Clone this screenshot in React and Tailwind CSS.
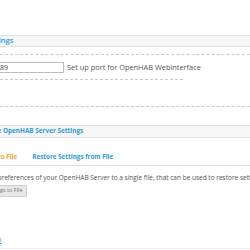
export default function App() {
  const font = { fontFamily: '"Open Sans", "Liberation Sans", sans-serif' };
  return (
    <div className="w-[250px] h-[250px] overflow-hidden bg-white relative" style={font}>
      <div className="flex flex-col ml-[-40px] w-[330px]">
        <div className="h-[35px]" />
        {/* Header 1 */}
        <div className="h-[12px] bg-[#f6f6f6] border-y border-[#e3e3e3] flex items-center pl-[7px]">
          <span className="text-[7.5px] font-semibold text-[#2f9bd8] leading-none">Port Settings</span>
        </div>
        <div className="h-[7px]" />
        <div className="border-t border-dashed border-[#c8c8c8]" />
        <div className="h-[7px]" />
        {/* Row */}
        <div className="flex items-center">
          <div className="w-[104px] shrink-0 h-[11px] border border-[#bdbdbd] bg-white flex items-center pl-[31px] text-[7px] text-[#444] leading-none">8089</div>
          <span className="ml-[3px] text-[7.4px] text-[#555] leading-none whitespace-nowrap">Set up port for OpenHAB Webinterface</span>
        </div>
        <div className="h-[6px]" />
        <div className="border-t border-dashed border-[#c8c8c8] w-[223px]" />
        <div className="h-[26px]" />
        <div className="border-t border-dashed border-[#c8c8c8]" />
        <div className="h-[18px]" />
        {/* Header 2 */}
        <div className="h-[13px] bg-[#f6f6f6] border-y border-[#e3e3e3] flex items-center">
          <span className="text-[6.4px] font-bold text-[#2f9bd8] leading-none whitespace-nowrap ml-[-22px]">Backup/Restore the OpenHAB Server Settings</span>
        </div>
        <div className="h-[16px]" />
        {/* Tabs */}
        <div className="flex items-end border-b border-[#e0e0e0] pb-[5px]">
          <span className="text-[6.3px] font-bold text-[#f0a030] leading-none whitespace-nowrap ml-[-14px]">Backup Settings to File</span>
          <span className="text-[6.3px] font-bold text-[#2f9bd8] leading-none whitespace-nowrap ml-[15px]">Restore Settings from File</span>
        </div>
        <div className="h-[9px]" />
        <div className="text-[6.5px] text-[#555] leading-none whitespace-nowrap ml-[5px]">Backup all preferences of your OpenHAB Server to a single file, that can be used to restore settings later.</div>
        <div className="h-[3px]" />
        <div className="flex">
          <div className="ml-[1px] h-[12px] px-[3px] bg-[#e8e8e8] border border-[#d0d0d0] rounded-[1px] flex items-center text-[5.5px] text-[#777] leading-none whitespace-nowrap">Backup Settings to File</div>
        </div>
        <div className="h-[40px]" />
        <div className="flex">
          <span className="ml-[20px] text-[6px] leading-none text-[#2f9bd8] underline bg-[#cfe6f5]">Refresh</span>
        </div>
        <div className="h-[5px]" />
        <div className="border-t border-[#ececec]" />
      </div>
    </div>
  );
}
